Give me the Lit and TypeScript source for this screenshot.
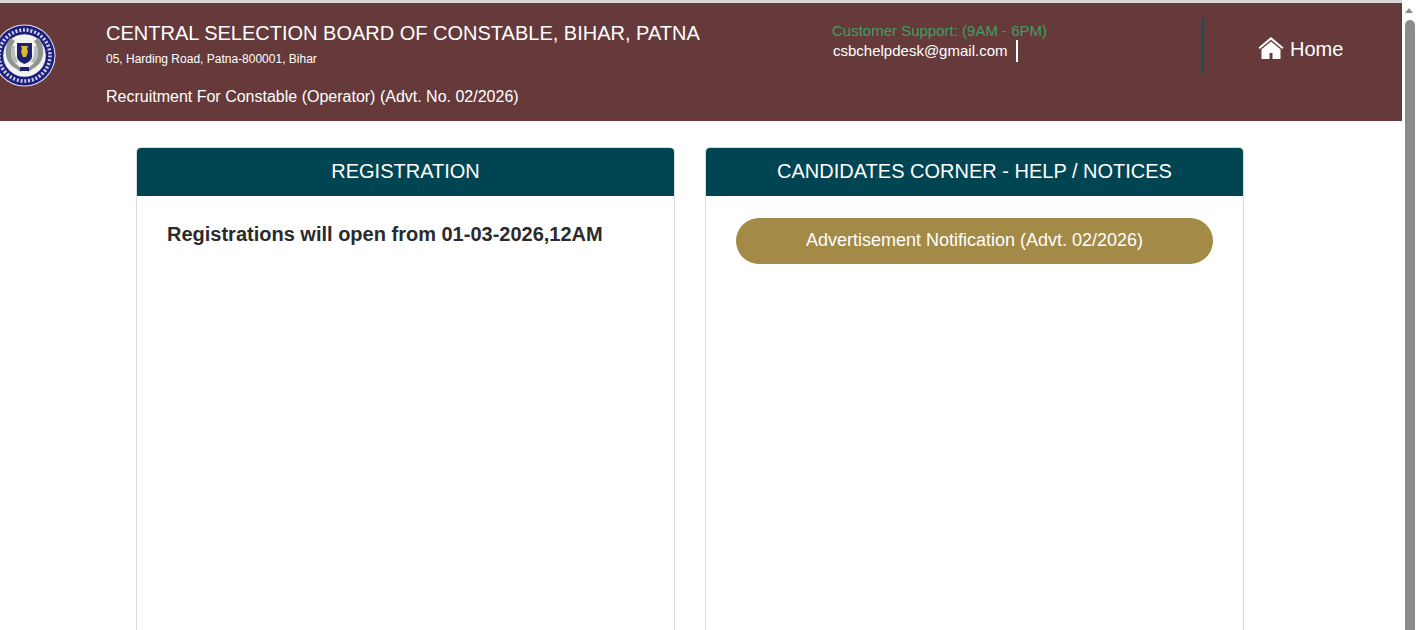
import { LitElement, html, css } from "lit";
import { customElement } from "lit/decorators.js";

@customElement("app-root")
export class AppRoot extends LitElement {
  static styles = css`
    :host { display: block; height: 630px; overflow: hidden; background: #fff; font-family: "Liberation Sans", Arial, sans-serif; }
    .shell { display: flex; height: 630px; }
    .page { width: 1402px; flex: none; display: flex; flex-direction: column; }
    .edge { height: 3px; flex: none; background: #d9d6d4; }
    .hdr { height: 118px; background: #663a3a; color: #fff; display: flex; flex: none; }
    .logo { width: 106px; flex: none; padding-top: 21px; box-sizing: border-box; overflow: hidden; }
    .logo svg { display: block; margin-left: -7px; }
    .org { width: 726px; flex: none; padding-top: 18px; }
    .org h1 { margin: 0; font-size: 20px; font-weight: 400; line-height: 25px; }
    .org .addr { font-size: 12px; line-height: 14px; margin-top: 6px; }
    .org .rec { font-size: 16px; line-height: 20px; margin-top: 21px; }
    .support { width: 370px; flex: none; padding-top: 18px; }
    .support .hrs { color: #3aa063; font-size: 15px; line-height: 20px; }
    .mail { display: flex; align-items: center; margin-top: -1px; font-size: 15px; line-height: 22px; padding-left: 1px; }
    .mail i { display: block; width: 2px; height: 22px; background: #fff; margin-left: 9px; }
    .home-wrap { margin-top: 14px; border-left: 2px solid #17505a; padding: 20px 0 0 54px; display: flex; align-items: flex-start; gap: 6px; height: 36px; font-size: 20px; line-height: 24px; }
    .home-wrap svg { margin-top: -1px; }
    .main { display: flex; gap: 30px; padding: 26px 0 0 136px; }
    .card { width: 539px; height: 520px; box-sizing: border-box; border: 1px solid #d8dcde; border-radius: 5px; overflow: hidden; flex: none; }
    .card h2 { margin: -1px -1px 0; height: 49px; background: #024552; color: #fff; font-size: 20px; font-weight: 400; line-height: 48px; text-align: center; }
    .msg { margin: 25px 0 0 30px; font-size: 20px; font-weight: 700; line-height: 26px; color: #2b2b2b; }
    .btn { display: block; margin: 22px 30px 0; height: 46px; border-radius: 23px; background: #a38a46; color: #fff; font-size: 18px; line-height: 44px; text-align: center; }
    .bar { flex: 1; position: relative; background: #fff; }
    .bar .up { position: absolute; left: 3px; top: 8px; width: 0; height: 0; border-left: 4.5px solid transparent; border-right: 4.5px solid transparent; border-bottom: 5px solid #8b8b8b; }
    .bar .thumb { position: absolute; left: 3px; top: 20px; width: 10px; height: 620px; border-radius: 5px 5px 0 0; background: #8b8b8b; }
  `;
  render() {
    return html`<div class="shell">
      <div class="page">
        <div class="edge"></div>
        <header class="hdr">
          <div class="logo">
            <svg width="63" height="63" viewBox="0 0 63 63">
              <circle cx="31.5" cy="31.5" r="31" fill="#e8e6ee"/>
              <circle cx="31.5" cy="31.5" r="30" fill="#1c1f7e"/>
              <circle cx="31.5" cy="31.5" r="25.500" fill="none" stroke="#cfd0ea" stroke-width="3.500" stroke-dasharray="2 1.800"/>
              <circle cx="31.5" cy="31.5" r="22.500" fill="#1c1f7e"/>
              <circle cx="31.5" cy="31.5" r="21.300" fill="#f2f2f2"/>
              <path d="M17 14c-6 9-6 21 2 28l9 6 1-3-6-5c-6-6-7-15-1-23z" fill="#8e9590"/>
              <path d="M46 14c6 9 6 21-2 28l-9 6-1-3 6-5c6-6 7-15 1-23z" fill="#8e9590"/>
              <path d="M19 22c-2 6-1 12 3 17l3-1c-3-5-4-10-3-16zM44 22c2 6 1 12-3 17l-3-1c3-5 4-10 3-16z" fill="#b9bdb9"/>
              <path d="M24 19h15v13c0 4-3 6-7.500 8-4.500-2-7.500-4-7.500-8z" fill="#1c2270"/>
              <path d="M28 22h7l-1 3 1 3-2 5h-3l-2-5 1-3z" fill="#e0b92f"/>
              <rect x="27" y="43" width="9" height="4" fill="#1c2270"/>
            </svg>
          </div>
          <div class="org">
            <h1>CENTRAL SELECTION BOARD OF CONSTABLE, BIHAR, PATNA</h1>
            <div class="addr">05, Harding Road, Patna-800001, Bihar</div>
            <div class="rec">Recruitment For Constable (Operator) (Advt. No. 02/2026)</div>
          </div>
          <div class="support">
            <div class="hrs">Customer Support: (9AM - 6PM)</div>
            <div class="mail">csbchelpdesk@gmail.com<i></i></div>
          </div>
          <div class="home-wrap">
            <svg width="26" height="24" viewBox="0 0 26 24">
              <path d="M13 1 0.500 11.500l1.300 1.600L13 3.800l11.200 9.300 1.300-1.600z" fill="#fff"/>
              <path fill-rule="evenodd" d="M13 5.500 3.500 13.300V23h19v-9.700zM11.500 17h3v6h-3z" fill="#fff"/>
            </svg>
            <span>Home</span>
          </div>
        </header>
        <main class="main">
          <section class="card"><h2>REGISTRATION</h2><p class="msg">Registrations will open from 01-03-2026,12AM</p></section>
          <section class="card"><h2>CANDIDATES CORNER - HELP / NOTICES</h2><a class="btn">Advertisement Notification (Advt. 02/2026)</a></section>
        </main>
      </div>
      <div class="bar"><div class="up"></div><div class="thumb"></div></div>
    </div>`;
  }
}
